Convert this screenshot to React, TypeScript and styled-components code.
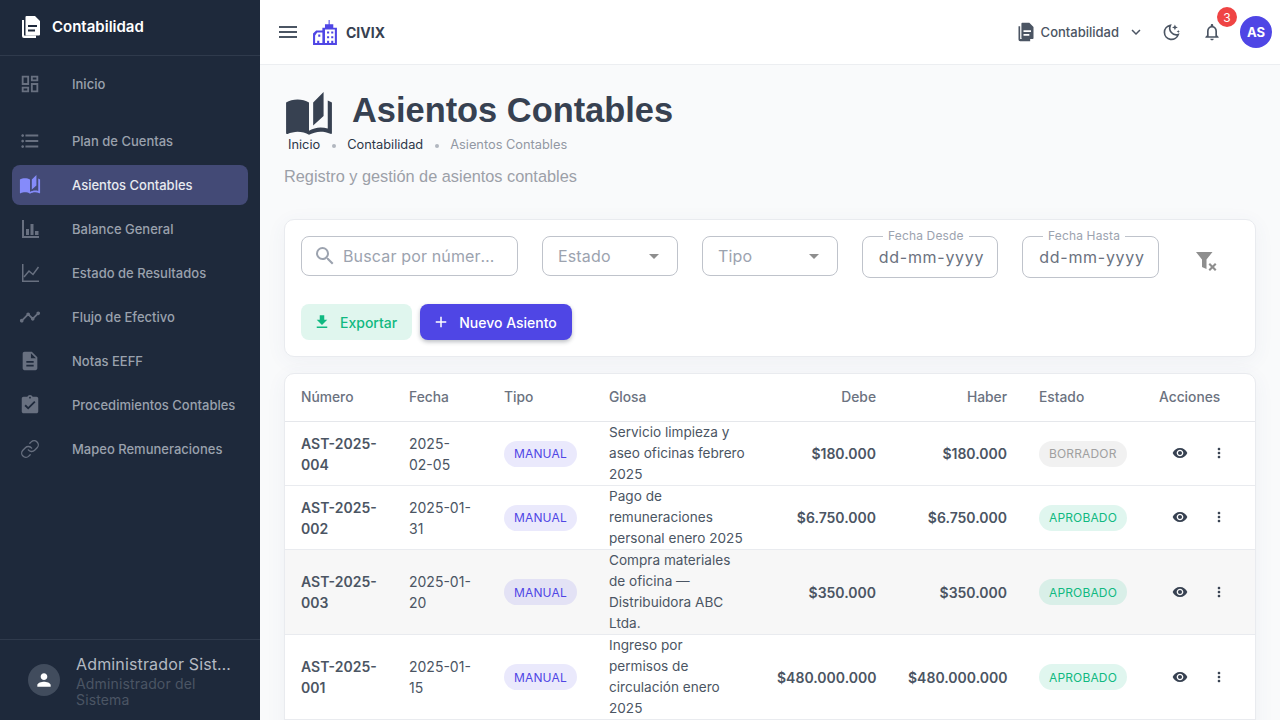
import React from 'react';
import styled, { createGlobalStyle } from 'styled-components';
import {
  MdOutlineDashboard,
  MdFormatListBulleted,
  MdAutoStories,
  MdTimeline,
  MdDescription,
  MdAssignmentTurnedIn,
  MdPerson,
  MdMenu,
  MdKeyboardArrowDown,
  MdOutlineNotifications,
  MdSearch,
  MdArrowDropDown,
  MdFileDownload,
  MdAdd,
  MdVisibility,
  MdMoreVert,
} from 'react-icons/md';
import { FiLink } from 'react-icons/fi';

const GlobalStyle = createGlobalStyle`
  html, body, #root {
    margin: 0;
    height: 100%;
    overflow: hidden;
  }
  body {
    font-family: Inter, "Liberation Sans", sans-serif;
    background: #f9fafb;
  }
  * {
    box-sizing: border-box;
  }
`;

const Layout = styled.div`
  display: flex;
  width: 1280px;
  height: 720px;
`;

const Sidebar = styled.aside`
  display: flex;
  flex-direction: column;
  flex: 0 0 260px;
  width: 260px;
  min-width: 0;
  background: #1e293b;
`;

const SideHeader = styled.div`
  display: flex;
  align-items: center;
  gap: 9px;
  height: 56px;
  padding: 0 0 2px 19px;
  border-bottom: 1px solid #2f3a4c;
  color: #fff;
  font-size: 15px;
  font-weight: 600;
`;

const NavList = styled.nav`
  display: flex;
  flex-direction: column;
  flex: 1;
  padding: 8px 12px 0;
`;

const NavItem = styled.a<{ $active?: boolean; $spaced?: boolean }>`
  display: flex;
  align-items: center;
  flex: 0 0 40px;
  height: 40px;
  margin-bottom: ${(p) => (p.$spaced ? '17px' : '4px')};
  padding-left: 7px;
  border-radius: 8px;
  background: ${(p) => (p.$active ? '#434a76' : 'transparent')};
  color: ${(p) => (p.$active ? '#e8eaf0' : '#9aa1ad')};
  font-size: 13px;
  font-weight: 500;

  svg {
    flex: 0 0 22px;
    color: ${(p) => (p.$active ? '#858bfa' : '#687080')};
  }
`;

const NavLabel = styled.span`
  margin-left: 31px;
`;

const SideFooter = styled.div`
  display: flex;
  align-items: center;
  gap: 16px;
  height: 81px;
  padding: 0 28px 0 28px;
  border-top: 1px solid #2f3a4c;
`;

const UserAvatar = styled.div`
  display: flex;
  align-items: center;
  justify-content: center;
  flex: 0 0 32px;
  height: 32px;
  border-radius: 50%;
  background: #414c5d;
  color: #fff;
`;

const UserInfo = styled.div`
  min-width: 0;
  flex: 1;
`;

const UserName = styled.div`
  overflow: hidden;
  color: #b4b9c2;
  font-size: 16px;
  line-height: 24px;
  letter-spacing: 0.15px;
  white-space: nowrap;
  text-overflow: ellipsis;
`;

const UserRole = styled.div`
  color: #4b5564;
  font-size: 14px;
  line-height: 16px;
  letter-spacing: 0.15px;
`;

const Main = styled.main`
  display: flex;
  flex-direction: column;
  flex: 1;
  min-width: 0;
  overflow: hidden;
`;

const Topbar = styled.header`
  display: flex;
  align-items: center;
  flex: 0 0 65px;
  padding: 0 8px 0 16px;
  background: #fff;
  border-bottom: 1px solid #eceef1;
  color: #4b5563;
`;

const Brand = styled.div`
  display: flex;
  align-items: center;
  gap: 7px;
  margin-left: 12px;
  color: #374151;
  font-size: 14px;
  font-weight: 700;
`;

const TopActions = styled.div`
  display: flex;
  align-items: center;
  margin-left: auto;
`;

const ModuleSwitch = styled.div`
  display: flex;
  align-items: center;
  gap: 5px;
  margin-right: 17px;
  font-size: 13px;
  font-weight: 500;
`;

const IconSlot = styled.div`
  position: relative;
  display: flex;
  align-items: center;
  justify-content: center;
  width: 20px;
  margin-right: 20px;
`;

const Badge = styled.span`
  position: absolute;
  top: -15px;
  left: 15px;
  display: flex;
  align-items: center;
  justify-content: center;
  width: 20px;
  height: 20px;
  border-radius: 50%;
  background: #ef4444;
  color: #fff;
  font-size: 12px;
  font-weight: 400;
`;

const Avatar = styled.div`
  display: flex;
  align-items: center;
  justify-content: center;
  width: 32px;
  height: 32px;
  margin-left: -2px;
  border-radius: 50%;
  background: #4f46e5;
  color: #fff;
  font-size: 13px;
  font-weight: 700;
`;

const Content = styled.div`
  display: flex;
  flex-direction: column;
  flex: 1;
  padding: 24px 24px 0;
`;

const TitleRow = styled.div`
  display: flex;
  align-items: center;
  gap: 18px;
  height: 44px;
  color: #374151;

  svg {
    flex: 0 0 50px;
    margin-top: 8px;
  }
`;

const Title = styled.h1`
  margin: 0 0 2px;
  font-family: "Liberation Sans", Arial, sans-serif;
  font-size: 34.4px;
  font-weight: 700;
`;

const Breadcrumbs = styled.div`
  display: flex;
  align-items: center;
  height: 22px;
  padding-left: 4px;
  font-size: 12.8px;
`;

const Crumb = styled.span<{ $current?: boolean }>`
  color: ${(p) => (p.$current ? '#9298a3' : '#2c3748')};
`;

const Dot = styled.span`
  width: 4px;
  height: 4px;
  margin: 4px 11.5px 0;
  border-radius: 50%;
  background: #b2b6bf;
`;

const Subtitle = styled.p`
  margin: 10px 0 32px;
  color: #9ca0a8;
  font-family: "Liberation Sans", Arial, sans-serif;
  font-size: 16.32px;
  line-height: 22px;
`;

const FilterCard = styled.section`
  display: flex;
  flex-direction: column;
  flex: none;
  gap: 20px;
  height: 138px;
  margin-bottom: 16px;
  padding: 16px;
  background: #fff;
  border: 1px solid #e9ebef;
  border-radius: 10px;
  box-shadow: 0 4px 20px rgba(70, 80, 130, 0.06);
`;

const FilterRow = styled.div`
  display: flex;
  align-items: flex-start;
  gap: 24px;
`;

const Field = styled.div<{ $width: number }>`
  display: flex;
  align-items: center;
  flex: 0 0 ${(p) => p.$width}px;
  min-width: 0;
  height: 40px;
  padding: 0 11px 0 15px;
  border: 1px solid #bfc3cb;
  border-radius: 8px;
  color: #9ca3af;
  font-size: 16px;
  letter-spacing: 0.15px;

  svg {
    flex: none;
  }
`;

const SearchInput = styled.input`
  flex: 1;
  width: 0;
  min-width: 0;
  margin: 0 6px;
  padding: 0;
  border: 0;
  outline: 0;
  background: transparent;
  font: inherit;
  letter-spacing: inherit;
  text-overflow: ellipsis;

  &::placeholder {
    color: #9ca3af;
    opacity: 1;
  }
`;

const SelectText = styled.span`
  flex: 1;
`;

const DateField = styled.div<{ $width: number }>`
  position: relative;
  display: flex;
  align-items: center;
  justify-content: center;
  flex: 0 0 ${(p) => p.$width}px;
  height: 42px;
  padding: 0 0 0 3px;
  border: 1px solid #bfc3cb;
  border-radius: 8px;
  color: #6b7280;
  font-size: 16px;
  letter-spacing: 0.7px;
`;

const DateLabel = styled.label`
  position: absolute;
  top: -8px;
  left: 20px;
  padding: 0 5px;
  background: #fff;
  color: #9ca3af;
  font-size: 12px;
  line-height: 14px;
  letter-spacing: 0.15px;
`;

const ClearButton = styled.div`
  display: flex;
  align-items: center;
  justify-content: center;
  width: 48px;
  height: 48px;
  padding-top: 2px;
`;

const ActionRow = styled.div`
  display: flex;
  gap: 8px;
`;

const ExportButton = styled.button`
  display: flex;
  align-items: center;
  gap: 9px;
  height: 36px;
  padding: 0 15px 0 12px;
  border: 0;
  border-radius: 8px;
  background: #e0f6ee;
  color: #10b981;
  font: 500 14px Inter, sans-serif;
`;

const PrimaryButton = styled.button`
  display: flex;
  align-items: center;
  gap: 9px;
  height: 36px;
  padding: 0 15px 0 12px;
  border: 0;
  border-radius: 8px;
  background: #4f46e5;
  box-shadow: 0 2px 4px rgba(31, 41, 55, 0.3);
  color: #fff;
  font: 500 14px Inter, sans-serif;
`;

const TableCard = styled.section`
  flex: none;
  overflow: hidden;
  padding-bottom: 52px;
  background: #fff;
  border: 1px solid #e9ebef;
  border-radius: 10px;
  box-shadow: 0 4px 20px rgba(70, 80, 130, 0.06);
`;

const Table = styled.table`
  width: 100%;
  border-collapse: collapse;
  table-layout: fixed;
  color: #4b5563;
  font-size: 14px;
  line-height: 21px;
`;

const Th = styled.th<{ $right?: boolean }>`
  height: 47px;
  padding: 1px 16px 0;
  border-bottom: 1px solid #e5e7eb;
  color: #6b7280;
  font-size: 13.8px;
  font-weight: 500;
  text-align: ${(p) => (p.$right ? 'right' : 'left')};
`;

const Row = styled.tr<{ $hover?: boolean }>`
  background: ${(p) => (p.$hover ? '#f7f7f7' : 'transparent')};
`;

const Td = styled.td<{ $right?: boolean; $bold?: boolean }>`
  padding: 1px 16px 0;
  border-bottom: 1px solid #e9ebef;
  font-weight: ${(p) => (p.$bold ? 600 : 400)};
  text-align: ${(p) => (p.$right ? 'right' : 'left')};
`;

const GlossCell = styled(Td)`
  padding: 0 16px;
  font-size: 13.6px;
`;

const ActionCell = styled(Td)`
  padding: 0 16px;
`;

const Chip = styled.span<{ $tone: 'manual' | 'draft' | 'ok' }>`
  display: inline-flex;
  align-items: center;
  height: 26px;
  padding: 0 10px;
  border-radius: 13px;
  font-size: 12px;
  font-weight: 400;
  letter-spacing: 0.15px;
  color: ${(p) =>
    p.$tone === 'manual' ? '#4f46e5' : p.$tone === 'ok' ? '#10b981' : '#a0a0a0'};
  background: ${(p) =>
    p.$tone === 'manual'
      ? 'rgba(79, 70, 229, 0.12)'
      : p.$tone === 'ok'
        ? 'rgba(16, 185, 129, 0.13)'
        : 'rgba(140, 140, 140, 0.12)'};
`;

const RowActions = styled.div`
  display: flex;
  align-items: center;
  gap: 23px;
  padding-left: 13px;
  color: #374151;
`;

const DocIcon = ({ size }: { size: number }) => (
  <svg width={size} height={size} viewBox="0 0 24 24" fill="currentColor">
    <path d="M3 5h2v15.5h12V23H5a2 2 0 0 1-2-2z" />
    <path
      fillRule="evenodd"
      d="M7.500 1h8.500l5 5v13.500a1 1 0 0 1-1 1H7.500a1 1 0 0 1-1-1V2a1 1 0 0 1 1-1zM9 10v2h9v-2zM9 14.500v2h7v-2z"
    />
  </svg>
);

const BarsIcon = () => (
  <svg width={22} height={22} viewBox="0 0 22 22" fill="currentColor">
    <path d="M3 2h2v16h15v2H3zM7 11h3v6H7zM11.500 6h3v11h-3zM16 13h3.500v4H16z" />
  </svg>
);

const LineIcon = () => (
  <svg width={22} height={22} viewBox="0 0 22 22" fill="none" stroke="currentColor" strokeWidth={1.500}>
    <path d="M3.750 2v17.250H20" />
    <path d="M5 15l5-6 4 3.500L19.500 5" />
  </svg>
);

const MoonStarIcon = () => (
  <svg width={20} height={20} viewBox="0 0 24 24" fill="none" stroke="currentColor" strokeWidth={2}>
    <path d="M10 4a8.500 8.500 0 1 0 9.500 11A8 8 0 0 1 10 4z" />
    <path
      fill="currentColor"
      stroke="none"
      d="M15.500 3l1 2.500 2.500 1-2.500 1-1 2.500-1-2.500-2.500-1 2.500-1zM19.500 9.500l.6 1.400 1.400.6-1.400.6-.6 1.400-.6-1.400-1.400-.6 1.400-.6z"
    />
  </svg>
);

const BuildingIcon = () => (
  <svg width={27} height={27} viewBox="0 0 26 26">
    <path
      fill="#4f46e5"
      fillRule="evenodd"
      d="M16 1h1v4h3.500v3.500H24V25H1V14l3-3h6V8.500h2.500V5H16zM3 16v7h2v-2h2v2h3v-10H5zM12.500 10v13h2v-2h2v2h2v-2h2v2h1.500V10zM6 15h2v2H6zM14.500 12h2v2h-2zM18.500 12h2v2h-2zM14.500 16.500h2v2h-2zM18.500 16.500h2v2h-2z"
    />
  </svg>
);

const FilterOffIcon = () => (
  <svg width={24} height={24} viewBox="0 0 24 24" fill="#8e8e8e">
    <path d="M1 3h16.500l-6 7.500V20l-3.500-1.500-1-.5v-7.500z" />
    <path d="M13.500 15.500l1.500-1.500 2.500 2.500 2.500-2.500 1.500 1.500-2.500 2.500 2.500 2.500-1.500 1.500-2.500-2.500-2.500 2.500-1.500-1.500 2.500-2.500z" />
  </svg>
);

const navItems = [
  { label: 'Inicio', icon: <MdOutlineDashboard size={22} />, spaced: true },
  { label: 'Plan de Cuentas', icon: <MdFormatListBulleted size={22} /> },
  { label: 'Asientos Contables', icon: <MdAutoStories size={22} />, active: true },
  { label: 'Balance General', icon: <BarsIcon /> },
  { label: 'Estado de Resultados', icon: <LineIcon /> },
  { label: 'Flujo de Efectivo', icon: <MdTimeline size={22} /> },
  { label: 'Notas EEFF', icon: <MdDescription size={22} /> },
  { label: 'Procedimientos Contables', icon: <MdAssignmentTurnedIn size={22} /> },
  { label: 'Mapeo Remuneraciones', icon: <FiLink size={20} strokeWidth={1.600} /> },
];

const rows = [
  {
    id: 'AST-2025-004',
    date: '2025-02-05',
    gloss: 'Servicio limpieza y aseo oficinas febrero 2025',
    amount: '$180.000',
    status: 'BORRADOR',
  },
  {
    id: 'AST-2025-002',
    date: '2025-01-31',
    gloss: 'Pago de remuneraciones personal enero 2025',
    amount: '$6.750.000',
    status: 'APROBADO',
  },
  {
    id: 'AST-2025-003',
    date: '2025-01-20',
    gloss: 'Compra materiales de oficina — Distribuidora ABC Ltda.',
    amount: '$350.000',
    status: 'APROBADO',
    hover: true,
  },
  {
    id: 'AST-2025-001',
    date: '2025-01-15',
    gloss: 'Ingreso por permisos de circulación enero 2025',
    amount: '$480.000.000',
    status: 'APROBADO',
  },
];

const App = () => (
  <Layout>
    <GlobalStyle />
    <Sidebar>
      <SideHeader>
        <DocIcon size={24} />
        Contabilidad
      </SideHeader>
      <NavList>
        {navItems.map((item) => (
          <NavItem key={item.label} $active={item.active} $spaced={item.spaced}>
            {item.icon}
            <NavLabel>{item.label}</NavLabel>
          </NavItem>
        ))}
      </NavList>
      <SideFooter>
        <UserAvatar>
          <MdPerson size={20} />
        </UserAvatar>
        <UserInfo>
          <UserName>Administrador Sistema</UserName>
          <UserRole>Administrador del Sistema</UserRole>
        </UserInfo>
      </SideFooter>
    </Sidebar>
    <Main>
      <Topbar>
        <MdMenu size={24} />
        <Brand>
          <BuildingIcon />
          CIVIX
        </Brand>
        <TopActions>
          <ModuleSwitch>
            <DocIcon size={20} />
            Contabilidad
            <MdKeyboardArrowDown size={18} style={{ marginLeft: 3 }} />
          </ModuleSwitch>
          <IconSlot>
            <MoonStarIcon />
          </IconSlot>
          <IconSlot>
            <MdOutlineNotifications size={20} />
            <Badge>3</Badge>
          </IconSlot>
          <Avatar>AS</Avatar>
        </TopActions>
      </Topbar>
      <Content>
        <TitleRow>
          <MdAutoStories size={50} />
          <Title>Asientos Contables</Title>
        </TitleRow>
        <Breadcrumbs>
          <Crumb>Inicio</Crumb>
          <Dot />
          <Crumb>Contabilidad</Crumb>
          <Dot />
          <Crumb $current>Asientos Contables</Crumb>
        </Breadcrumbs>
        <Subtitle>Registro y gestión de asientos contables</Subtitle>
        <FilterCard>
          <FilterRow>
            <Field $width={217}>
              <MdSearch size={24} color="#9ca3af" style={{ marginLeft: -4 }} />
              <SearchInput placeholder="Buscar por número, glosa..." />
            </Field>
            <Field $width={136}>
              <SelectText>Estado</SelectText>
              <MdArrowDropDown size={24} color="#8e8e8e" />
            </Field>
            <Field $width={136}>
              <SelectText>Tipo</SelectText>
              <MdArrowDropDown size={24} color="#8e8e8e" />
            </Field>
            <DateField $width={136}>
              <DateLabel>Fecha Desde</DateLabel>
              dd-mm-yyyy
            </DateField>
            <DateField $width={137}>
              <DateLabel>Fecha Hasta</DateLabel>
              dd-mm-yyyy
            </DateField>
            <ClearButton>
              <FilterOffIcon />
            </ClearButton>
          </FilterRow>
          <ActionRow>
            <ExportButton>
              <MdFileDownload size={18} />
              Exportar
            </ExportButton>
            <PrimaryButton>
              <MdAdd size={18} />
              Nuevo Asiento
            </PrimaryButton>
          </ActionRow>
        </FilterCard>
        <TableCard>
          <Table>
            <colgroup>
              <col width={108} />
              <col width={95} />
              <col width={105} />
              <col width={168} />
              <col width={131} />
              <col width={131} />
              <col width={120} />
              <col width={112} />
            </colgroup>
            <thead>
              <tr>
                <Th>Número</Th>
                <Th>Fecha</Th>
                <Th>Tipo</Th>
                <Th>Glosa</Th>
                <Th $right>Debe</Th>
                <Th $right>Haber</Th>
                <Th>Estado</Th>
                <Th>Acciones</Th>
              </tr>
            </thead>
            <tbody>
              {rows.map((row) => (
                <Row key={row.id} $hover={row.hover}>
                  <Td $bold>{row.id}</Td>
                  <Td>{row.date}</Td>
                  <Td>
                    <Chip $tone="manual">MANUAL</Chip>
                  </Td>
                  <GlossCell>{row.gloss}</GlossCell>
                  <Td $right $bold>
                    {row.amount}
                  </Td>
                  <Td $right $bold>
                    {row.amount}
                  </Td>
                  <Td>
                    <Chip $tone={row.status === 'BORRADOR' ? 'draft' : 'ok'}>{row.status}</Chip>
                  </Td>
                  <ActionCell>
                    <RowActions>
                      <MdVisibility size={16} />
                      <MdMoreVert size={16} />
                    </RowActions>
                  </ActionCell>
                </Row>
              ))}
            </tbody>
          </Table>
        </TableCard>
      </Content>
    </Main>
  </Layout>
);

export default App;
